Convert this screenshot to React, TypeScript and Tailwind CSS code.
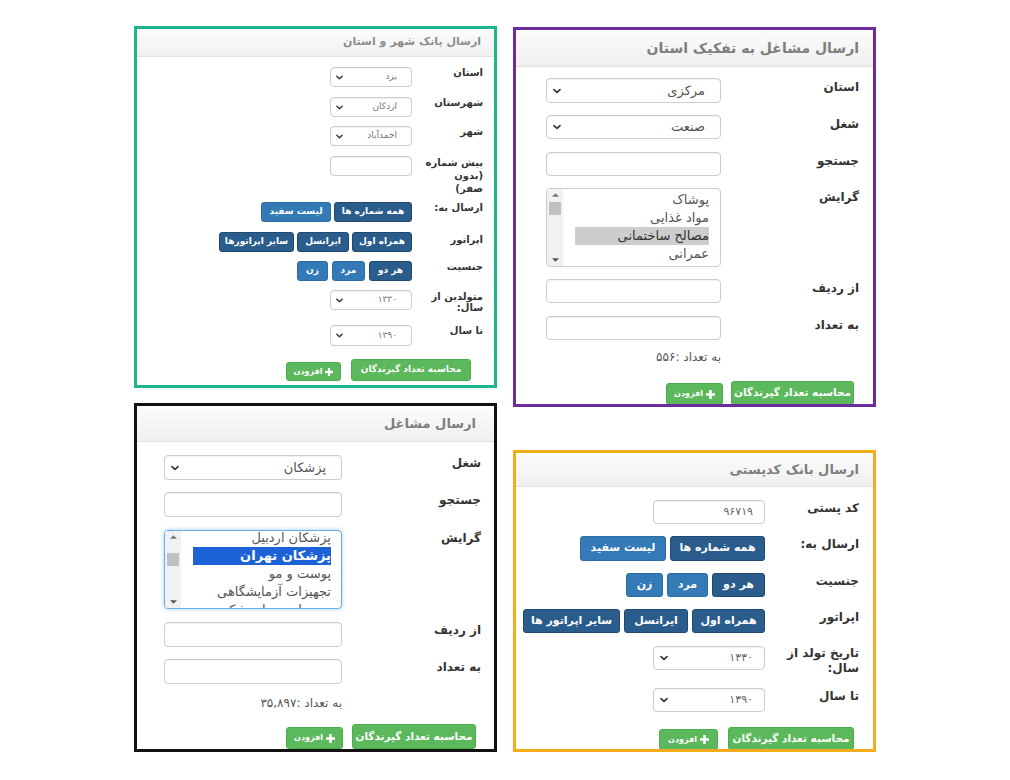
import React from "react";

const FONT = "font-['DejaVu_Sans',sans-serif]";

function Chevron({ className }: { className: string }) {
  return (
    <svg viewBox="0 0 10 6" className={className}>
      <path d="M1.2 1.2 L5 4.8 L8.8 1.2" fill="none" stroke="#333" strokeWidth="2" strokeLinecap="round" strokeLinejoin="round" />
    </svg>
  );
}

function Select({ box, text, textCls, chevCls }: { box: string; text: string; textCls: string; chevCls: string }) {
  return (
    <div className={`flex shrink-0 items-center justify-between border border-[#ccc] rounded-[4px] bg-white shadow-[inset_0_1px_1px_rgba(0,0,0,0.06)] ${box}`}>
      <span className={`whitespace-nowrap ${textCls}`}>{text}</span>
      <Chevron className={chevCls} />
    </div>
  );
}

function Input({ box, children }: { box: string; children?: React.ReactNode }) {
  return (
    <div className={`flex shrink-0 items-center border border-[#ccc] rounded-[4px] bg-white shadow-[inset_0_1px_1px_rgba(0,0,0,0.06)] ${box}`}>
      {children}
    </div>
  );
}

function Btn({ cls, children }: { cls: string; children: React.ReactNode }) {
  return (
    <div className={`flex shrink-0 items-center justify-center rounded-[3px] border text-white font-bold whitespace-nowrap ${cls}`}>
      {children}
    </div>
  );
}

function Row({ cls, labelCls, label, children }: { cls: string; labelCls: string; label: React.ReactNode; children: React.ReactNode }) {
  return (
    <div className={`flex items-start ${cls}`}>
      <div className={`shrink-0 font-bold text-[#333] ${labelCls}`}>{label}</div>
      {children}
    </div>
  );
}

function Plus({ className }: { className: string }) {
  return (
    <svg viewBox="0 0 10 10" className={className}>
      <rect x="3.6" y="0" width="2.8" height="10" fill="#fff" />
      <rect x="0" y="3.6" width="10" height="2.8" fill="#fff" />
    </svg>
  );
}

const DARK = "bg-[#2b5d8c] border-[#204a70]";
const LIGHT = "bg-[#337ab7] border-[#2e6da4]";
const GREEN = "bg-[#5cb85c] border-[#4cae4c]";

function Panel1() {
  const lab = "w-[71px] text-[10px] leading-[12px]";
  const sel = "w-[82px] h-[20px] pr-[14px] pl-[5px]";
  const st = "text-[9px] text-[#777]";
  const ch = "w-[7px] h-[5px]";
  return (
    <div dir="rtl" className="w-[363px] h-[362px] border-[3px] border-[#1db48e] bg-white flex flex-col overflow-hidden">
      <div className="h-[28px] shrink-0 bg-gradient-to-b from-[#fcfcfc] to-[#f0f0f0] border-b border-[#e3e3e3] flex items-center pr-[13px] text-[11px] font-bold text-[#8c8c8c]">
        ارسال بانک شهر و استان
      </div>
      <div className="flex flex-col pr-[11px]">
        <Row cls="mt-[10px]" labelCls={lab} label="استان">
          <Select box={sel} text="یزد" textCls={st} chevCls={ch} />
        </Row>
        <Row cls="mt-[10px]" labelCls={lab} label="شهرستان">
          <Select box={sel} text="اردکان" textCls={st} chevCls={ch} />
        </Row>
        <Row cls="mt-[9px]" labelCls={lab} label="شهر">
          <Select box={sel} text="احمدآباد" textCls={st} chevCls={ch} />
        </Row>
        <Row cls="mt-[10px]" labelCls="w-[71px] text-[10px] leading-[13px]" label={<>پیش شماره<br />(بدون<br />صفر)</>}>
          <Input box="w-[82px] h-[20px]" />
        </Row>
        <Row cls="mt-[7px]" labelCls={lab} label="ارسال به:">
          <div className="flex gap-[3px] text-[9px]">
            <Btn cls={`${DARK} w-[78px] h-[20px]`}>همه شماره ها</Btn>
            <Btn cls={`${LIGHT} w-[70px] h-[20px]`}>لیست سفید</Btn>
          </div>
        </Row>
        <Row cls="mt-[10px]" labelCls={`${lab} pt-[2px]`} label="اپراتور">
          <div className="flex gap-[3px] text-[9px]">
            <Btn cls={`${DARK} w-[60px] h-[20px]`}>همراه اول</Btn>
            <Btn cls={`${DARK} w-[52px] h-[20px]`}>ایرانسل</Btn>
            <Btn cls={`${DARK} w-[75px] h-[20px]`}>سایر اپراتورها</Btn>
          </div>
        </Row>
        <Row cls="mt-[9px]" labelCls={lab} label="جنسیت">
          <div className="flex gap-[4px] text-[9px]">
            <Btn cls={`${DARK} w-[43px] h-[20px]`}>هر دو</Btn>
            <Btn cls={`${LIGHT} w-[33px] h-[20px]`}>مرد</Btn>
            <Btn cls={`${LIGHT} w-[31px] h-[20px]`}>زن</Btn>
          </div>
        </Row>
        <Row cls="mt-[9px]" labelCls="w-[71px] text-[10px] leading-[11px] pt-[1px]" label={<>متولدین از<br />سال:</>}>
          <Select box={sel} text="۱۳۳۰" textCls={st} chevCls={ch} />
        </Row>
        <Row cls="mt-[12px]" labelCls={lab} label="تا سال">
          <Select box="w-[82px] h-[21px] pr-[14px] pl-[5px]" text="۱۳۹۰" textCls={st} chevCls={ch} />
        </Row>
        <div className="mt-[13px] flex items-end gap-[10px] pr-[12px]">
          <Btn cls={`${GREEN} w-[120px] h-[22px] text-[9px]`}>محاسبه تعداد گیرندگان</Btn>
          <Btn cls={`${GREEN} w-[55px] h-[19px] text-[8px] gap-[3px]`}>
            <Plus className="w-[8px] h-[8px]" />
            <span>افزودن</span>
          </Btn>
        </div>
      </div>
    </div>
  );
}

function Listbox({
  box,
  items,
  sel,
  selCls,
  itemsCls,
  itemCls,
  thumbCls,
}: {
  box: string;
  items: string[];
  sel: number;
  selCls: string;
  itemsCls: string;
  itemCls: string;
  thumbCls: string;
}) {
  return (
    <div className={`flex shrink-0 border rounded-[4px] bg-white overflow-hidden ${box}`}>
      <div className={`flex-1 flex flex-col overflow-hidden ${itemsCls}`}>
        {items.map((t, i) => (
          <div key={i} className={`whitespace-nowrap shrink-0 ${itemCls} ${i === sel ? selCls : "text-[#555]"}`}>
            {t}
          </div>
        ))}
      </div>
      <div className="w-[16px] shrink-0 bg-[#f1f1f1] flex flex-col items-center justify-between py-[4px] relative">
        <svg viewBox="0 0 8 4" className="w-[7px] h-[4px]">
          <path d="M0 4 L4 0 L8 4 Z" fill="#777" />
        </svg>
        <div className={`absolute left-[2px] w-[12px] bg-[#c1c1c1] ${thumbCls}`} />
        <svg viewBox="0 0 8 4" className="w-[7px] h-[4px]">
          <path d="M0 0 L4 4 L8 0 Z" fill="#555" />
        </svg>
      </div>
    </div>
  );
}

function Panel2() {
  const lab = "w-[138px] text-[12px] leading-[16px] pt-[1px]";
  const sel = "w-[175px] pr-[15px] pl-[6px]";
  const st = "text-[13px] text-[#555]";
  const ch = "w-[8px] h-[6px]";
  return (
    <div dir="rtl" className="w-[363px] h-[380px] border-[3px] border-[#6c2c9e] bg-white flex flex-col overflow-hidden">
      <div className="h-[37px] shrink-0 bg-gradient-to-b from-[#fcfcfc] to-[#efefef] border-b border-[#e0e0e0] flex items-center pr-[14px] text-[14px] font-bold text-[#7e7e7e]">
        ارسال مشاغل به تفکیک استان
      </div>
      <div className="flex flex-col pr-[14px]">
        <Row cls="mt-[11px]" labelCls={lab} label="استان">
          <Select box={`${sel} h-[25px]`} text="مرکزی" textCls={st} chevCls={ch} />
        </Row>
        <Row cls="mt-[12px]" labelCls={lab} label="شغل">
          <Select box={`${sel} h-[24px]`} text="صنعت" textCls={st} chevCls={ch} />
        </Row>
        <Row cls="mt-[13px]" labelCls={lab} label="جستجو">
          <Input box="w-[175px] h-[24px]" />
        </Row>
        <Row cls="mt-[12px]" labelCls={lab} label="گرایش">
          <Listbox
            box="w-[175px] h-[79px] border-[#ccc]"
            items={["پوشاک", "مواد غذایی", "مصالح ساختمانی", "عمرانی"]}
            sel={2}
            selCls="bg-[#cdcdcd] text-[#333]"
            itemsCls="pt-[2px] pr-[11px] pl-[12px]"
            itemCls="h-[18px] leading-[18px] text-[13px]"
            thumbCls="top-[13px] h-[13px]"
          />
        </Row>
        <Row cls="mt-[12px]" labelCls={lab} label="از ردیف">
          <Input box="w-[175px] h-[24px]" />
        </Row>
        <Row cls="mt-[13px]" labelCls={lab} label="به تعداد">
          <Input box="w-[175px] h-[24px]" />
        </Row>
        <div className="mt-[9px] pr-[138px] text-[12px] leading-[16px] text-[#555]">به تعداد :۵۵۶</div>
        <div className="mt-[16px] flex items-end gap-[8px] pr-[5px]">
          <Btn cls={`${GREEN} w-[123px] h-[24px] text-[10.5px]`}>محاسبه تعداد گیرندگان</Btn>
          <Btn cls={`${GREEN} w-[57px] h-[22px] text-[8px] gap-[3px]`}>
            <Plus className="w-[9px] h-[9px]" />
            <span>افزودن</span>
          </Btn>
        </div>
      </div>
    </div>
  );
}

function Panel3() {
  const lab = "w-[139px] text-[12px] leading-[16px]";
  return (
    <div dir="rtl" className="w-[363px] h-[349px] border-[3px] border-[#111] bg-white flex flex-col overflow-hidden">
      <div className="h-[36px] shrink-0 bg-gradient-to-b from-[#fcfcfc] to-[#efefef] border-b border-[#e0e0e0] flex items-center pr-[18px] text-[13px] font-bold text-[#7e7e7e]">
        ارسال مشاغل
      </div>
      <div className="flex flex-col pr-[13px]">
        <Row cls="mt-[13px]" labelCls={lab} label="شغل">
          <Select box="w-[178px] h-[25px] pr-[15px] pl-[6px]" text="پزشکان" textCls="text-[13px] text-[#555]" chevCls="w-[8px] h-[6px]" />
        </Row>
        <Row cls="mt-[12px]" labelCls={lab} label="جستجو">
          <Input box="w-[178px] h-[25px]" />
        </Row>
        <Row cls="mt-[13px]" labelCls={lab} label="گرایش">
          <Listbox
            box="w-[178px] h-[79px] border-[#66afe9] shadow-[0_0_4px_rgba(102,175,233,0.6)]"
            items={["پزشکان اردبیل", "پزشکان تهران", "پوست و مو", "تجهیزات آزمایشگاهی", "تجهیزات دندانپزشکی"]}
            sel={1}
            selCls="bg-[#1d62d6] text-white font-bold"
            itemsCls="-mt-[2px] pr-[10px] pl-[12px]"
            itemCls="h-[18px] leading-[18px] text-[13px]"
            thumbCls="top-[22px] h-[13px]"
          />
        </Row>
        <Row cls="mt-[13px]" labelCls={lab} label="از ردیف">
          <Input box="w-[178px] h-[25px]" />
        </Row>
        <Row cls="mt-[12px]" labelCls={lab} label="به تعداد">
          <Input box="w-[178px] h-[25px]" />
        </Row>
        <div className="mt-[11px] pr-[139px] text-[12px] leading-[16px] text-[#555]">به تعداد :۳۵,۸۹۷</div>
        <div className="mt-[13px] flex items-end gap-[9px] pr-[5px]">
          <Btn cls={`${GREEN} w-[124px] h-[25px] text-[10.5px]`}>محاسبه تعداد گیرندگان</Btn>
          <Btn cls={`${GREEN} w-[57px] h-[22px] text-[8px] gap-[3px]`}>
            <Plus className="w-[9px] h-[9px]" />
            <span>افزودن</span>
          </Btn>
        </div>
      </div>
    </div>
  );
}

function Panel4() {
  const lab = "w-[94px] text-[12px] leading-[15px] pt-[1px]";
  const sel = "w-[112px] h-[24px] pr-[11px] pl-[6px]";
  const st = "text-[11px] text-[#666]";
  const ch = "w-[8px] h-[6px]";
  return (
    <div dir="rtl" className="w-[363px] h-[302px] border-[3px] border-[#f5ac1a] bg-white flex flex-col overflow-hidden">
      <div className="h-[34px] shrink-0 bg-gradient-to-b from-[#fcfcfc] to-[#efefef] border-b border-[#e0e0e0] flex items-center pr-[14px] text-[13px] font-bold text-[#7e7e7e]">
        ارسال بانک کدپستی
      </div>
      <div className="flex flex-col pr-[14px]">
        <Row cls="mt-[13px]" labelCls={lab} label="کد پستی">
          <Input box="w-[112px] h-[24px] pr-[11px]">
            <span className="text-[11px] text-[#666]">۹۶۷۱۹</span>
          </Input>
        </Row>
        <Row cls="mt-[12px]" labelCls={lab} label="ارسال به:">
          <div className="flex gap-[4px] text-[11px]">
            <Btn cls={`${DARK} w-[95px] h-[25px]`}>همه شماره ها</Btn>
            <Btn cls={`${LIGHT} w-[86px] h-[25px]`}>لیست سفید</Btn>
          </div>
        </Row>
        <Row cls="mt-[12px]" labelCls={lab} label="جنسیت">
          <div className="flex gap-[4px] text-[11px]">
            <Btn cls={`${DARK} w-[53px] h-[24px]`}>هر دو</Btn>
            <Btn cls={`${LIGHT} w-[41px] h-[24px]`}>مرد</Btn>
            <Btn cls={`${LIGHT} w-[37px] h-[24px]`}>زن</Btn>
          </div>
        </Row>
        <Row cls="mt-[12px]" labelCls={lab} label="اپراتور">
          <div className="flex gap-[4px] text-[11px]">
            <Btn cls={`${DARK} w-[73px] h-[24px]`}>همراه اول</Btn>
            <Btn cls={`${DARK} w-[64px] h-[24px]`}>ایرانسل</Btn>
            <Btn cls={`${DARK} w-[97px] h-[24px]`}>سایر اپراتور ها</Btn>
          </div>
        </Row>
        <Row cls="mt-[13px]" labelCls="w-[94px] text-[12px] leading-[15px] h-[30px]" label={<>تاریخ تولد از<br />سال:</>}>
          <Select box={sel} text="۱۳۳۰" textCls={st} chevCls={ch} />
        </Row>
        <Row cls="mt-[12px]" labelCls={lab} label="تا سال">
          <Select box={sel} text="۱۳۹۰" textCls={st} chevCls={ch} />
        </Row>
        <div className="mt-[15px] flex items-end gap-[10px] pr-[5px]">
          <Btn cls={`${GREEN} w-[126px] h-[23px] text-[10.5px]`}>محاسبه تعداد گیرندگان</Btn>
          <Btn cls={`${GREEN} w-[59px] h-[21px] text-[8px] gap-[3px]`}>
            <Plus className="w-[9px] h-[9px]" />
            <span>افزودن</span>
          </Btn>
        </div>
      </div>
    </div>
  );
}

export default function App() {
  return (
    <div className={`w-[1010px] h-[780px] bg-white flex gap-[16px] pl-[134px] ${FONT}`}>
      <div className="flex flex-col gap-[15px] pt-[26px]">
        <Panel1 />
        <Panel3 />
      </div>
      <div className="flex flex-col gap-[43px] pt-[27px]">
        <Panel2 />
        <Panel4 />
      </div>
    </div>
  );
}
